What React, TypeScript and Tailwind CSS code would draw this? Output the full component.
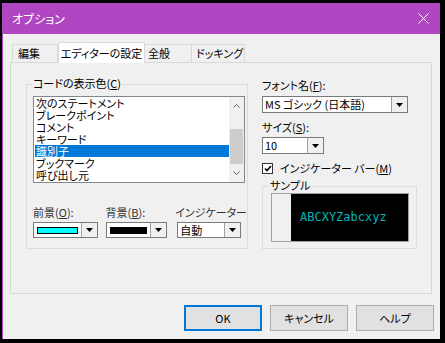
import React from 'react';

const jp = "font-['Noto_Sans_CJK_JP','Noto_Sans',sans-serif] [font-feature-settings:'palt']";

const Key = ({ k }: { k: string }) => (
    <>
        (<span className="underline underline-offset-[1px]">{k}</span>)
    </>
);

const Arrow = () => (
    <div className="h-full w-[16px] flex items-center justify-center bg-[#f0f0f0] border-l border-[#a0a0a0]">
        <svg width="7" height="4" viewBox="0 0 7 4">
            <path d="M0 0 H7 L3.5 4 Z" fill="#000" />
        </svg>
    </div>
);

const Select = ({ children, className }: { children: React.ReactNode; className: string }) => (
    <div className={`flex items-stretch bg-white border border-[#7a7a7a] ${className}`}>
        <div className="flex-1 flex items-center pl-[2px] overflow-hidden">{children}</div>
        <Arrow />
    </div>
);

const ColorSelect = ({ color, width }: { color: string; width: string }) => (
    <div className={`flex items-stretch h-[16px] bg-white border border-[#7a7a7a] ${width}`}>
        <div className="flex-1 flex items-center px-[3px]">
            <div className={`h-[7px] w-full border border-black ${color}`} />
        </div>
        <Arrow />
    </div>
);

const items = ['次のステートメント', 'ブレークポイント', 'コメント', 'キーワード', '識別子', 'ブックマーク', '呼び出し元'];

export default function App() {
    return (
        <div className={`w-[445px] h-[343px] bg-black pt-[3px] pl-[2px] text-[11px] leading-[13px] text-black whitespace-nowrap ${jp}`}>
            <div className="w-[438px] h-[336px] bg-[#f0f0f0] border-l border-[#b146c2] flex flex-col">
                {/* title bar */}
                <div className="h-[31px] bg-[#b146c2] flex items-center justify-between pl-[9px] pr-[11px] text-white">
                    <span className="text-[12px]">オプション</span>
                    <svg width="11" height="11" viewBox="0 0 11 11">
                        <path d="M0.5 0.5 L10.5 10.5 M10.5 0.5 L0.5 10.5" stroke="#fff" strokeWidth="1" />
                    </svg>
                </div>

                {/* tabs */}
                <div className="ml-[7px] mt-[8px] w-[422px]">
                    <div className="h-[20px] flex items-end pl-[2px]">
                        <div className="h-[18px] w-[46px] border border-b-0 border-[#d9d9d9] flex items-center pl-[5px]">編集</div>
                        <div className="relative z-10 -mb-px h-[21px] w-[87px] bg-white border border-b-0 border-[#d9d9d9] flex items-center justify-center">エディターの設定</div>
                        <div className="h-[18px] w-[47px] border border-b-0 border-l-0 border-[#d9d9d9] flex items-center pl-[3px]">全般</div>
                        <div className="h-[18px] w-[53px] border border-b-0 border-l-0 border-[#d9d9d9] flex items-center pl-[4px]">ドッキング</div>
                    </div>

                    {/* panel */}
                    <div className="h-[232px] border border-[#d9d9d9] bg-[#f0f0f0] flex items-start pl-[15px]">
                        {/* left group */}
                        <div className="relative mt-[21px] w-[222px] h-[165px] border border-[#dcdcdc] pl-[6px] pt-[11px]">
                            <span className="absolute -top-[8px] left-[5px] bg-[#f0f0f0] px-[1px]">
                                コードの表示色<Key k="C" />
                            </span>
                            <div className="w-[212px] h-[87px] bg-white border border-[#828790] flex">
                                <div className="flex-1 flex flex-col pl-[1px]">
                                    {items.map((t, i) => (
                                        <div
                                            key={t}
                                            className={`h-[12px] leading-[12px] pl-[1px] ${i === 4 ? 'bg-[#0078d7] text-white' : ''}`}
                                        >
                                            {t}
                                        </div>
                                    ))}
                                </div>
                                <div className="w-[15px] bg-[#f0f0f0] flex flex-col items-center">
                                    <div className="h-[17px] flex items-center">
                                        <svg width="7" height="4" viewBox="0 0 7 4">
                                            <path d="M0.5 3.5 L3.5 0.5 L6.5 3.5" stroke="#606060" fill="none" />
                                        </svg>
                                    </div>
                                    <div className="mt-[15px] h-[35px] w-[13px] bg-[#cdcdcd]" />
                                    <div className="flex-1 flex items-center">
                                        <svg width="7" height="4" viewBox="0 0 7 4">
                                            <path d="M0.5 0.5 L3.5 3.5 L6.5 0.5" stroke="#606060" fill="none" />
                                        </svg>
                                    </div>
                                </div>
                            </div>

                            <div className="mt-[23px] flex">
                                <div className="w-[73px] flex flex-col gap-[3px]">
                                    <span className="text-[#333]">前景<Key k="O" />:</span>
                                    <ColorSelect color="bg-[#00ffff]" width="w-[65px]" />
                                </div>
                                <div className="w-[71px] flex flex-col gap-[3px]">
                                    <span className="text-[#333]">背景<Key k="B" />:</span>
                                    <ColorSelect color="bg-black" width="w-[61px]" />
                                </div>
                                <div className="flex flex-col gap-[3px] -ml-[1px]">
                                    <span className="text-[#333]">インジケーター</span>
                                    <Select className="h-[16px] w-[64px] ml-[2px]">自動</Select>
                                </div>
                            </div>
                        </div>

                        {/* right column */}
                        <div className="ml-[14px] mt-[16px] flex flex-col">
                            <span>フォント名<Key k="F" />:</span>
                            <Select className="mt-[4px] h-[17px] w-[146px]">MS ゴシック (日本語)</Select>
                            <span className="mt-[8px]">サイズ<Key k="S" />:</span>
                            <Select className="mt-[3px] h-[17px] w-[62px]">10</Select>
                            <div className="mt-[8px] flex items-center gap-[7px]">
                                <div className="w-[11px] h-[11px] bg-white border border-[#333] flex items-center justify-center">
                                    <svg width="8" height="7" viewBox="0 0 8 7">
                                        <path d="M1 3.5 L3 5.5 L7 1" stroke="#000" strokeWidth="1.6" fill="none" />
                                    </svg>
                                </div>
                                <span>インジケーター バー<Key k="M" /></span>
                            </div>
                            <div className="relative mt-[11px] w-[155px] h-[63px] border border-[#dcdcdc] pl-[8px] pt-[6px]">
                                <span className="absolute -top-[8px] left-[5px] bg-[#f0f0f0] px-[2px]">サンプル</span>
                                <div className="w-[138px] h-[49px] border border-[#a0a0a0] flex">
                                    <div className="w-[19px] bg-[#f0f0f0]" />
                                    <div className="flex-1 bg-black flex items-center pl-[9px] text-[#00b4b4] font-['DejaVu_Sans_Mono',monospace] text-[12px]">
                                        ABCXYZabcxyz
                                    </div>
                                </div>
                            </div>
                        </div>
                    </div>
                </div>

                {/* buttons */}
                <div className="mt-[11px] flex justify-end gap-[8px] pr-[6px]">
                    <button className="w-[78px] h-[26px] bg-[#e1e1e1] border-2 border-[#0078d7]">OK</button>
                    <button className="w-[78px] h-[26px] bg-[#e1e1e1] border border-[#adadad]">キャンセル</button>
                    <button className="w-[78px] h-[26px] bg-[#e1e1e1] border border-[#adadad]">ヘルプ</button>
                </div>
            </div>
        </div>
    );
}
